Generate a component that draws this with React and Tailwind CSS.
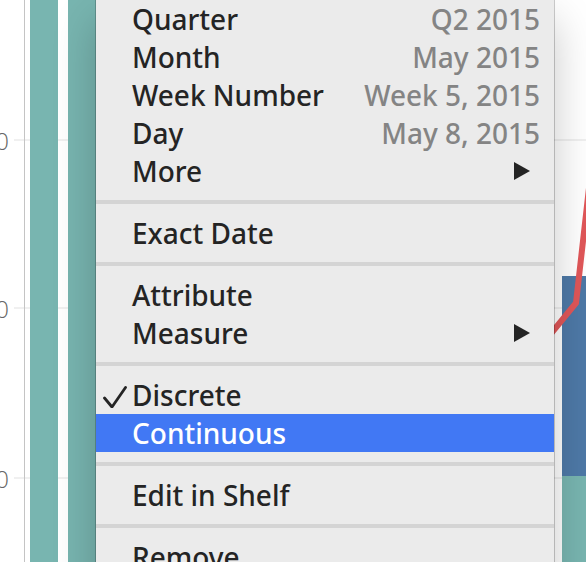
const groups = [
  [
    { label: "Quarter", hint: "Q2 2015" },
    { label: "Month", hint: "May 2015" },
    { label: "Week Number", hint: "Week 5, 2015" },
    { label: "Day", hint: "May 8, 2015" },
    { label: "More", submenu: true },
  ],
  [{ label: "Exact Date" }],
  [{ label: "Attribute" }, { label: "Measure", submenu: true }],
  [{ label: "Discrete", checked: true }, { label: "Continuous", active: true }],
  [{ label: "Edit in Shelf" }],
  [{ label: "Remove" }],
];

function Chart() {
  return (
    <svg className="block h-[562px] w-full" aria-hidden="true">
      {[140, 308, 478].map((y) => (
        <g key={y}>
          <rect x="14" y={y - 1} width="100%" height="2" fill="#f0f0f0" />
          <text
            x="9"
            y={y + 10}
            textAnchor="end"
            fill="#666666"
            className="font-['Open_Sans',sans-serif] text-[24px] font-light"
          >
            0
          </text>
        </g>
      ))}
      <rect x="24" y="0" width="1" height="562" fill="#c4c4c4" />
      <rect x="30" y="0" width="28" height="562" fill="#78b5b0" />
      <rect x="68" y="0" width="60" height="562" fill="#78b5b0" />
      <rect x="562" y="276" width="60" height="200" fill="#4e79a7" />
      <rect x="562" y="476" width="60" height="86" fill="#78b5b0" />
      <polyline points="540,347 576,303 589,188" fill="none" stroke="#e15759" strokeWidth="6" />
    </svg>
  );
}

function MenuItem({ item }) {
  return (
    <button
      type="button"
      role={item.checked ? "menuitemcheckbox" : "menuitem"}
      aria-checked={item.checked}
      className={`flex h-[38px] w-full items-center pr-3.5 text-left text-[28px] leading-[38px] font-medium whitespace-nowrap ${
        item.active ? "bg-[#4178f4] text-white" : "text-[#242424]"
      }`}
    >
      <span className="flex w-9 shrink-0 justify-start pl-1.5">
        {item.checked && (
          <svg width="26" height="26" viewBox="0 0 26 26" fill="none" aria-hidden="true">
            <path
              d="M2.5 16 L10 25 L23.5 5.5"
              stroke="#242424"
              strokeWidth="2.8"
              strokeLinecap="round"
              strokeLinejoin="round"
            />
          </svg>
        )}
      </span>
      <span className="grow">{item.label}</span>
      {item.hint && <span className="text-[#848484]">{item.hint}</span>}
      {item.submenu && (
        <svg className="mr-2.5" width="16" height="18" viewBox="0 0 16 18" aria-hidden="true">
          <path d="M0 0 L16 9 L0 18 Z" fill="#242424" />
        </svg>
      )}
    </button>
  );
}

export default function App() {
  return (
    <main className="relative h-screen overflow-hidden bg-white">
      <Chart />
      <div
        role="menu"
        className="absolute top-0 left-24 w-[458px] bg-[#ebebeb] pb-2.5 font-['Noto_Sans',sans-serif] shadow-[0_0_0_1px_rgba(0,0,0,0.2),0_20px_40px_rgba(0,0,0,0.22)]"
      >
        {groups.map((items, i) => (
          <div key={items[0].label}>
            {i > 0 && <div role="separator" className="my-2.5 h-1 bg-[#d4d4d4]" />}
            {items.map((item) => (
              <MenuItem key={item.label} item={item} />
            ))}
          </div>
        ))}
      </div>
    </main>
  );
}
